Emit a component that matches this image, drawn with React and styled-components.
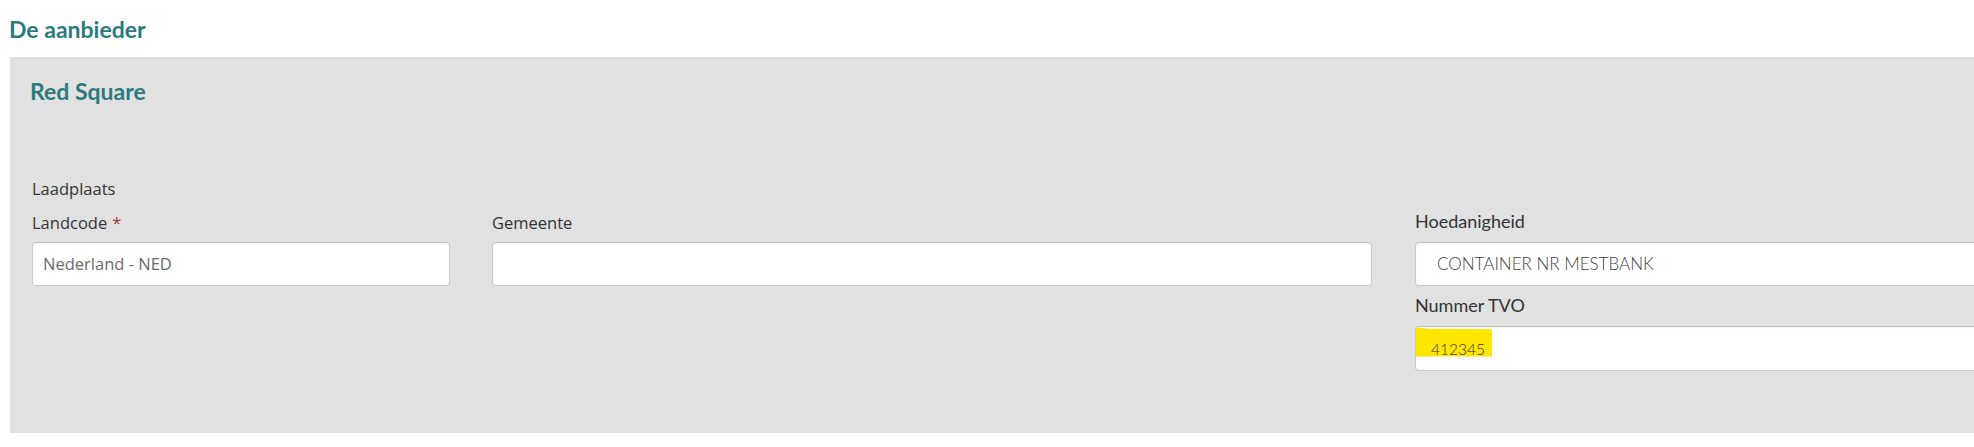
import React from 'react';
import styled, { createGlobalStyle, css } from 'styled-components';

const GlobalStyle = createGlobalStyle`
  html, body {
    margin: 0;
    padding: 0;
    background: #ffffff;
    overflow: hidden;
  }
  body {
    font-family: "Open Sans", "Noto Sans", sans-serif;
  }
`;

const teal = '#2b7a7e';

const Page = styled.div`
  padding: 14px 0 0 10px;
`;

const Heading = styled.h2`
  margin: 0 0 13px -1px;
  font: 700 23px/30px Lato, "Noto Sans", sans-serif;
  color: ${teal};
`;

const Panel = styled.section`
  background: #e1e1e1;
  padding: 19px 0 62px 22px;
  overflow: hidden;
`;

const PanelTitle = styled.h3`
  margin: 0 0 72px -2px;
  font: 700 23px/30px Lato, "Noto Sans", sans-serif;
  color: ${teal};
`;

const Group = styled.div`
  margin-bottom: 12px;
  font: 400 16.5px/22px "Open Sans", sans-serif;
  color: #333333;
`;

const Grid = styled.div`
  display: grid;
  grid-template-columns: 418px 880px 640px;
  column-gap: 42px;
  align-items: start;
`;

const Column = styled.div`
  display: flex;
  flex-direction: column;
  margin-left: ${p => p.$shift || 0}px;
`;

const Label = styled.label`
  color: #333333;
  ${p => p.$face === 'lato'
    ? css`
        font: 400 18px/18px Lato, sans-serif;
        margin-bottom: 12px;
      `
    : css`
        font: 400 16.5px/22px "Open Sans", sans-serif;
        margin-bottom: 8.4px;
      `}
  margin-top: ${p => p.$top || 0}px;
`;

const Required = styled.span`
  margin-left: 5px;
  color: #a8343f;
`;

const Field = styled.div`
  box-sizing: border-box;
  height: ${p => p.$height || 44}px;
  display: flex;
  align-items: ${p => (p.$marked ? 'flex-start' : 'center')};
  padding-left: ${p => p.$pad || 0}px;
  background: #ffffff;
  border: 1px solid #c8c8c8;
  border-top-color: #c0c0c0;
  border-radius: 4px;
  box-shadow: inset 0 1px 2px rgba(0, 0, 0, 0.06);
`;

const Value = styled.span`
  ${p => p.$face === 'lato'
    ? css`
        font: 300 17px/20px Lato, sans-serif;
        color: #3f3f3f;
      `
    : css`
        font: 400 16.5px/20px "Open Sans", sans-serif;
        color: #6a6a6a;
      `}
`;

const Mark = styled.span`
  box-sizing: border-box;
  display: flex;
  align-items: flex-end;
  width: 76px;
  height: 29px;
  margin-top: 1px;
  padding-left: 15px;
  background: #ffe600;
  clip-path: polygon(0 0, 18% 4%, 100% 6%, 100% 100%, 0 100%);
  font: 300 15.5px/15px Lato, sans-serif;
  color: #333333;
`;

export default function App() {
  return (
    <>
      <GlobalStyle />
      <Page>
        <Heading>De aanbieder</Heading>
        <Panel>
          <PanelTitle>Red Square</PanelTitle>
          <Group>Laadplaats</Group>
          <Grid>
            <Column>
              <Label>
                Landcode<Required>*</Required>
              </Label>
              <Field $pad={10}>
                <Value>Nederland - NED</Value>
              </Field>
            </Column>
            <Column>
              <Label>Gemeente</Label>
              <Field />
            </Column>
            <Column $shift={1}>
              <Label $face="lato">Hoedanigheid</Label>
              <Field $pad={21}>
                <Value $face="lato">CONTAINER NR MESTBANK</Value>
              </Field>
              <Label $face="lato" $top={9.5}>Nummer TVO</Label>
              <Field $height={45} $marked>
                <Mark>412345</Mark>
              </Field>
            </Column>
          </Grid>
        </Panel>
      </Page>
    </>
  );
}
